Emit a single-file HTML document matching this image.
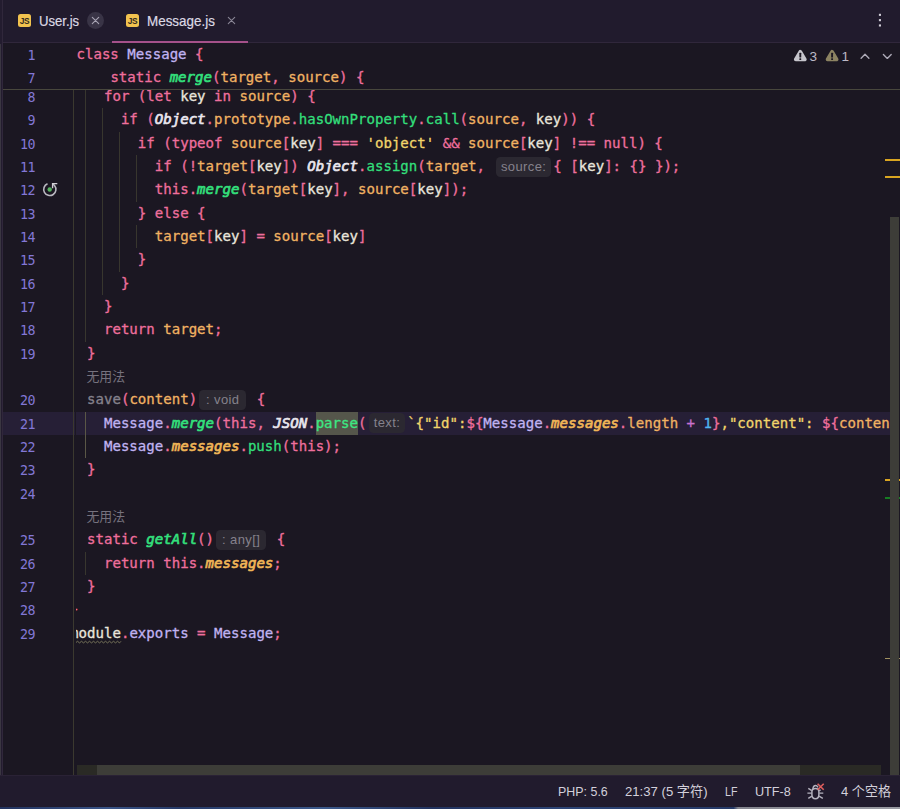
<!DOCTYPE html>
<html lang="zh-CN">
<head>
<meta charset="utf-8">
<title>Message.js</title>
<style>
*{box-sizing:border-box;margin:0;padding:0}
html,body{width:900px;height:809px;overflow:hidden;background:#1b1722}
body{position:relative;font-family:"Liberation Sans","Noto Sans CJK SC",sans-serif;color:#d6d3dd}
.abs{position:absolute}
/* tab bar */
#tabbar{position:absolute;left:0;top:0;width:900px;height:42px;background:#211b2d}
#tabline{position:absolute;left:0;top:41.5px;width:900px;height:1.5px;background:#30273b}
#leftstrip{position:absolute;left:0;top:0;width:2px;height:775px;background:#231c2f;z-index:12}
#leftstrip2{position:absolute;left:0;top:44px;width:1.3px;height:731px;background:#3a3641;z-index:13}
#leftline{position:absolute;left:2px;top:0;width:1px;height:775px;background:#30273b;z-index:12}
.jsicon{position:absolute;top:13.5px;width:13px;height:13px;border-radius:2.5px;background:#f2c34f;color:#3b3424;font:bold 8.4px/13px "Liberation Sans",sans-serif;text-align:center;letter-spacing:-0.4px;padding-top:1.7px;color:#322c1f}
.tabtxt{position:absolute;top:12px;font-size:14.5px;line-height:18px;color:#dcd9e4;white-space:nowrap;transform-origin:0 50%;transform:scaleX(0.905);-webkit-text-stroke:0.2px #dcd9e4}
#close1{position:absolute;left:87px;top:12px;width:17px;height:17px;border-radius:50%;background:#393446}
#underline{position:absolute;left:111.5px;top:40.5px;width:136.5px;height:2.2px;background:#a5518a;z-index:2}
/* editor */
#sticky{position:absolute;left:3px;top:43px;width:897px;height:46.5px;background:#1b1722;z-index:5}
#stickyline{position:absolute;left:3px;top:89px;width:897px;height:1px;background:#48473d;z-index:6}
#gutline{position:absolute;left:73.4px;top:90px;width:1px;height:685px;background:#3b392f;z-index:4}
#gutter{position:absolute;left:3px;top:43px;width:72.5px;height:732px;background:#1b1722;z-index:3}
#code{position:absolute;left:0;top:0;width:890px;height:775px;overflow:hidden;z-index:1}
.mono,.cl,.ln,.scl{font-family:"DejaVu Sans Mono","Liberation Mono",monospace}
.cl{-webkit-text-stroke:0.3px;position:absolute;left:70.1px;height:23.3px;line-height:23.3px;font-size:14.07px;white-space:pre}
.scl{-webkit-text-stroke:0.3px;position:absolute;left:76.5px;height:23.3px;line-height:23.3px;font-size:14.07px;white-space:pre;z-index:7}
.ln{position:absolute;left:3px;width:32px;text-align:right;height:23.3px;line-height:23.3px;padding-top:1.1px;font-size:13.3px;color:#8377d6;z-index:8;letter-spacing:-0.5px}
.curline{position:absolute;left:3px;width:887px;height:23.3px;background:#261f36}
.ig{position:absolute;width:1px;background:#38362e}
.ig2{background:#5a5746}
.uh{position:absolute;left:86.4px;height:23.3px;line-height:24px;font-size:12.9px;color:#76727e;white-space:nowrap}
.ih{-webkit-text-stroke:0;display:inline-block;vertical-align:top;margin-top:1.6px;height:20.3px;text-align:center;border-radius:4.5px;background:#2b2831;color:#85828c;font:13px/19.6px "Liberation Sans",sans-serif;letter-spacing:0.4px;text-indent:0.4px;overflow:hidden}
.k{color:#ef6f9d}.k2{color:#c972cf}
.v{color:#e9e5dc}.p{color:#f1b263}.b{color:#ef6f9d}
.f{color:#33df7b}.fi{color:#33df7b;font-style:italic;-webkit-text-stroke:0.7px}
.o{color:#e9e6ee;font-style:italic;-webkit-text-stroke:0.7px}
.m{color:#f0b557;font-style:italic;-webkit-text-stroke:0.7px}
.c{color:#c0b3f2}.s{color:#f2d56b}.n{color:#4fb4f1}.g{color:#85828d}
.selbg{position:absolute;height:23.3px;background:#55564b}.f2{color:#3ce883}
.wavy{text-decoration:underline wavy #77745c;text-decoration-thickness:1px;text-underline-offset:3px}
/* right */
.mk{position:absolute;left:885px;width:15px;height:2px;background:#d9a521;z-index:2}
#vthumb{position:absolute;left:890px;top:217px;width:9px;height:558px;background:#3d3d38;z-index:9}
#htrack{position:absolute;left:76.5px;top:765.2px;width:804.5px;height:9.8px;background:#2a2a25;z-index:9}
#hthumb{position:absolute;left:97px;top:765.2px;width:702.5px;height:9.8px;background:#3d3d38;z-index:10}
/* status */
#status{position:absolute;left:0;top:775px;width:900px;height:32px;background:#211b2d;z-index:11;border-top:1px solid #2a2235}
.cj{position:relative;top:0.9px}
.st{position:absolute;top:7.6px;font-size:13.3px;line-height:16px;color:#d3d0db;white-space:nowrap;transform-origin:0 50%}
#bottom{position:absolute;left:0;top:807.3px;width:900px;height:1.7px;z-index:12;background:linear-gradient(90deg,#22335f 0%,#3a5588 12%,#263a68 20%,#3c5a8c 36%,#22335f 48%,#2d4576 62%,#263a68 81.5%,#85868f 82%,#9a9ba3 100%)}
</style>
</head>
<body>
<div id="tabbar">
  <div class="jsicon" style="left:18px">JS</div>
  <div class="tabtxt" style="left:38.5px">User.js</div>
  <div id="close1"></div>
  <svg class="abs" style="left:91px;top:16px" width="9" height="9" viewBox="0 0 9 9"><path d="M1.3 1.3 L7.7 7.7 M7.7 1.3 L1.3 7.7" stroke="#a9a5b5" stroke-width="1.1" fill="none" stroke-linecap="round"/></svg>
  <div class="jsicon" style="left:126px">JS</div>
  <div class="tabtxt" style="left:146.5px;transform:scaleX(0.925)">Message.js</div>
  <svg class="abs" style="left:227px;top:16px" width="9" height="9" viewBox="0 0 9 9"><path d="M1.3 1.3 L7.7 7.7 M7.7 1.3 L1.3 7.7" stroke="#8a8696" stroke-width="1.1" fill="none" stroke-linecap="round"/></svg>
  <svg class="abs" style="left:875px;top:10px" width="10" height="20" viewBox="0 0 10 20"><rect x="3.9" y="3.8" width="2.1" height="2.1" fill="#cfccd6"/><rect x="3.9" y="9.1" width="2.1" height="2.1" fill="#cfccd6"/><rect x="3.9" y="14.4" width="2.1" height="2.1" fill="#cfccd6"/></svg>
</div>
<div id="tabline"></div>
<div id="leftstrip"></div><div id="leftstrip2"></div><div id="leftline"></div>
<div id="underline"></div>

<div id="code">
<div class="curline" style="top:411.6px"></div>
<div class="selbg" style="top:411.6px;left:315.9px;width:42.4px"></div>
<div class="ig" style="left:85.3px;top:85.0px;height:256.6px"></div>
<div class="ig" style="left:102.3px;top:108.3px;height:186.6px"></div>
<div class="ig" style="left:119.2px;top:131.7px;height:140.0px"></div>
<div class="ig" style="left:136.2px;top:155.0px;height:46.7px"></div>
<div class="ig" style="left:136.2px;top:225.0px;height:23.3px"></div>
<div class="ig ig2" style="left:85.3px;top:411.6px;height:46.7px"></div>
<div class="ig" style="left:85.3px;top:551.6px;height:23.3px"></div>
<div class="cl" style="top:85.0px"><span class="w">    </span><span class="k">for (</span><span class="k">let </span><span class="v">key </span><span class="k">in </span><span class="p">source</span><span class="k">) {</span></div>
<div class="cl" style="top:108.3px"><span class="w">      </span><span class="k">if (</span><span class="o">Object</span><span class="k">.</span><span class="p">prototype</span><span class="k">.</span><span class="f">hasOwnProperty</span><span class="k">.</span><span class="f">call</span><span class="k">(</span><span class="p">source</span><span class="k">, </span><span class="v">key</span><span class="k">)) {</span></div>
<div class="cl" style="top:131.7px"><span class="w">        </span><span class="k">if (typeof </span><span class="p">source</span><span class="b">[</span><span class="v">key</span><span class="b">] </span><span class="k">=== </span><span class="s">'object' </span><span class="k">&amp;&amp; </span><span class="p">source</span><span class="b">[</span><span class="v">key</span><span class="b">] </span><span class="k">!== null) {</span></div>
<div class="cl" style="top:155.0px"><span class="w">          </span><span class="k">if (!</span><span class="p">target</span><span class="b">[</span><span class="v">key</span><span class="b">]</span><span class="k">) </span><span class="o">Object</span><span class="k">.</span><span class="f">assign</span><span class="k">(</span><span class="p">target</span><span class="k">, </span><span class="ih" style="width:54.8px;margin-left:2.5px;margin-right:2.5px">source:</span><span class="k">{ </span><span class="b">[</span><span class="v">key</span><span class="b">]</span><span class="k">: {} });</span></div>
<div class="cl" style="top:178.3px"><span class="w">          </span><span class="k">this.</span><span class="fi">merge</span><span class="k">(</span><span class="p">target</span><span class="b">[</span><span class="v">key</span><span class="b">]</span><span class="k">, </span><span class="p">source</span><span class="b">[</span><span class="v">key</span><span class="b">]</span><span class="k">);</span></div>
<div class="cl" style="top:201.6px"><span class="w">        </span><span class="k">} else {</span></div>
<div class="cl" style="top:225.0px"><span class="w">          </span><span class="p">target</span><span class="b">[</span><span class="v">key</span><span class="b">] </span><span class="k">= </span><span class="p">source</span><span class="b">[</span><span class="v">key</span><span class="b">]</span></div>
<div class="cl" style="top:248.3px"><span class="w">        </span><span class="k">}</span></div>
<div class="cl" style="top:271.6px"><span class="w">      </span><span class="k">}</span></div>
<div class="cl" style="top:295.0px"><span class="w">    </span><span class="k">}</span></div>
<div class="cl" style="top:318.3px"><span class="w">    </span><span class="k">return </span><span class="p">target</span><span class="k">;</span></div>
<div class="cl" style="top:341.6px"><span class="w">  </span><span class="k">}</span></div>
<div class="uh" style="top:365.0px">无用法</div>
<div class="cl" style="top:388.3px"><span class="w">  </span><span class="g">save</span><span class="k">(</span><span class="p">content</span><span class="k">)</span><span class="ih" style="width:47.0px;margin-left:1.9px;margin-right:2.3px">: void</span><span class="k"> {</span></div>
<div class="cl" style="top:411.6px"><span class="w">    </span><span class="c">Message</span><span class="k">.</span><span class="fi">merge</span><span class="k">(this, </span><span class="o">JSON</span><span class="k">.</span><span class="f2">parse</span><span class="k">(</span><span class="ih" style="width:35.7px;margin-left:2.5px;margin-right:2.5px">text:</span><span class="s">`{"id":</span><span class="k">${</span><span class="c">Message</span><span class="k">.</span><span class="m">messages</span><span class="k">.</span><span class="p">length </span><span class="k2">+ </span><span class="n">1</span><span class="k">}</span><span class="s">,"content": </span><span class="k">${</span><span class="p">content</span></div>
<div class="cl" style="top:434.9px"><span class="w">    </span><span class="c">Message</span><span class="k">.</span><span class="m">messages</span><span class="k">.</span><span class="f">push</span><span class="k">(this);</span></div>
<div class="cl" style="top:458.3px"><span class="w">  </span><span class="k">}</span></div>
<div class="cl" style="top:481.6px"></div>
<div class="uh" style="top:504.9px">无用法</div>
<div class="cl" style="top:528.3px"><span class="w">  </span><span class="k">static </span><span class="fi">getAll</span><span class="k">()</span><span class="ih" style="width:49.8px;margin-left:2.0px;margin-right:2.5px">: any[]</span><span class="k"> {</span></div>
<div class="cl" style="top:551.6px"><span class="w">    </span><span class="k">return this.</span><span class="m">messages</span><span class="k">;</span></div>
<div class="cl" style="top:574.9px"><span class="w">  </span><span class="k">}</span></div>
<div class="cl" style="top:598.3px"><span class="k">}</span></div>
<div class="cl" style="top:621.6px"><span class="v">module</span><span class="k">.</span><span class="c">exports </span><span class="k">= </span><span class="c">Message</span><span class="k">;</span></div>
<svg class="abs" style="left:0;top:0" width="200" height="775" viewBox="0 0 200 775"><path d="M75.50 642.89 L77.50 641.29 L79.50 642.89 L81.50 641.29 L83.50 642.89 L85.50 641.29 L87.50 642.89 L89.50 641.29 L91.50 642.89 L93.50 641.29 L95.50 642.89 L97.50 641.29 L99.50 642.89 L101.50 641.29 L103.50 642.89 L105.50 641.29 L107.50 642.89 L109.50 641.29 L111.50 642.89 L113.50 641.29 L115.50 642.89 L117.50 641.29 L119.50 642.89 L121.00 641.29" fill="none" stroke="#807d60" stroke-width="0.9"/></svg>
</div>

<div id="gutter"></div>
<div class="ln" style="top:85.0px">8</div>
<div class="ln" style="top:108.3px">9</div>
<div class="ln" style="top:131.7px">10</div>
<div class="ln" style="top:155.0px">11</div>
<div class="ln" style="top:178.3px">12</div>
<div class="ln" style="top:201.6px">13</div>
<div class="ln" style="top:225.0px">14</div>
<div class="ln" style="top:248.3px">15</div>
<div class="ln" style="top:271.6px">16</div>
<div class="ln" style="top:295.0px">17</div>
<div class="ln" style="top:318.3px">18</div>
<div class="ln" style="top:341.6px">19</div>
<div class="ln" style="top:388.3px">20</div>
<div class="ln" style="top:411.6px">21</div>
<div class="ln" style="top:434.9px">22</div>
<div class="ln" style="top:458.3px">23</div>
<div class="ln" style="top:481.6px">24</div>
<div class="ln" style="top:528.3px">25</div>
<div class="ln" style="top:551.6px">26</div>
<div class="ln" style="top:574.9px">27</div>
<div class="ln" style="top:598.3px">28</div>
<div class="ln" style="top:621.6px">29</div>
<div class="curline" style="top:411.6px;z-index:4;width:72px"></div>
<div id="gutline"></div>

<!-- recursive call icon on line 12 -->
<svg class="abs" style="left:41px;top:178.3px;z-index:8" width="20" height="23.3" viewBox="0 0 20 23.3">
  <path d="M6.50 5.80 A6.10 6.10 0 1 0 13.50 7.55 L11.80 5.85" fill="none" stroke="#bab9c1" stroke-width="1.55" stroke-linecap="butt"/>
  <path d="M16.30 5.65 L11.60 5.65 L11.60 10.25" fill="none" stroke="#d0cfd5" stroke-width="1.4" stroke-linecap="butt" stroke-linejoin="miter"/>
  <circle cx="8.70" cy="11.50" r="2.2" fill="#55b25f"/>
</svg>

<!-- sticky lines -->
<div id="sticky"></div>
<div class="scl" style="top:43px"><span class="k">class </span><span class="c">Message </span><span class="k">{</span></div>
<div class="scl" style="top:66.1px"><span class="w">    </span><span class="k">static </span><span class="fi">merge</span><span class="k">(</span><span class="p">target</span><span class="k">, </span><span class="p">source</span><span class="k">) {</span></div>
<div class="ln" style="top:42.9px;z-index:8">1</div>
<div class="ln" style="top:66.2px;z-index:8">7</div>
<div id="stickyline"></div>

<!-- inspections widget -->
<svg class="abs" style="left:793px;top:48px;z-index:8" width="104" height="16" viewBox="0 0 104 16">
  <path d="M7.3 3.75 L11.9 11.4 L2.7 11.4 Z" fill="#c6c5cc" stroke="#c6c5cc" stroke-width="3.6" stroke-linejoin="round"/>
  <rect x="6.35" y="4.8" width="1.9" height="4.7" rx="0.5" fill="#1b1722"/>
  <rect x="6.35" y="10.3" width="1.9" height="1.7" rx="0.5" fill="#1b1722"/>
  <path d="M39.1 3.75 L43.7 11.4 L34.5 11.4 Z" fill="#8c8362" stroke="#8c8362" stroke-width="3.6" stroke-linejoin="round"/>
  <rect x="38.15" y="4.8" width="1.9" height="4.7" rx="0.5" fill="#1b1722"/>
  <rect x="38.15" y="10.3" width="1.9" height="1.7" rx="0.5" fill="#1b1722"/>
  <path d="M68.1 10.2 L72 6.3 L75.9 10.2" fill="none" stroke="#aeabb8" stroke-width="1.35" stroke-linecap="round" stroke-linejoin="round"/>
  <path d="M90.4 6.5 L94.3 10.4 L98.2 6.5" fill="none" stroke="#aeabb8" stroke-width="1.35" stroke-linecap="round" stroke-linejoin="round"/>
</svg>
<div class="abs" style="left:809.6px;top:49.2px;font-size:13.6px;line-height:16px;color:#bcb9c6;z-index:8">3</div>
<div class="abs" style="left:841.6px;top:49.2px;font-size:13.6px;line-height:16px;color:#bcb9c6;z-index:8">1</div>

<!-- error stripe marks -->
<div class="mk" style="top:159.2px"></div>
<div class="mk" style="top:176.2px"></div>
<div class="mk" style="top:479px"></div>
<div class="mk" style="top:497.3px;background:#177c23"></div>
<div class="mk" style="top:657.5px;background:#a09060;height:1.6px"></div>
<div id="vthumb"></div>
<div id="htrack"></div>
<div id="hthumb"></div>

<div id="status">
  <div class="st" style="left:558px;transform:scaleX(0.935)">PHP: 5.6</div>
  <div class="st" style="left:624.8px;transform:scaleX(0.988)">21:37 (5 <span class="cj">字符</span>)</div>
  <div class="st" style="left:724.6px;transform:scaleX(0.8)">LF</div>
  <div class="st" style="left:754.5px;transform:scaleX(0.95)">UTF-8</div>
  <svg class="abs" style="left:806px;top:5px" width="20" height="20" viewBox="0 0 20 20">
    <path d="M5.9 10.8 Q5.9 7.4 9.4 7.4 Q12.9 7.4 12.9 10.8 L12.9 13.6 Q12.9 17.8 9.4 17.8 Q5.9 17.8 5.9 13.6 Z" fill="none" stroke="#b4b2be" stroke-width="1.5"/>
    <path d="M6.9 7.7 Q7.2 4.5 9.6 4.5 Q11.1 4.5 11.7 5.9" fill="none" stroke="#b4b2be" stroke-width="1.4" stroke-linecap="round"/>
    <path d="M2.3 7.4 L5.8 9.7 M1.4 12.1 L5.6 12.1 M2.3 17.3 L5.9 15.2 M13.2 9.7 L14.6 8.8 M13.4 12.1 L17.3 12.1 M13.1 15.2 L16.8 17.3" fill="none" stroke="#b4b2be" stroke-width="1.4" stroke-linecap="butt"/>
    <path d="M11.6 2.7 L17.7 8.8 M17.7 2.7 L11.6 8.8" stroke="#df5f5e" stroke-width="1.6" stroke-linecap="butt"/>
  </svg>
  <div class="st" style="left:840.8px;transform:scaleX(0.98)">4 <span class="cj">个空格</span></div>
</div>
<div id="bottom"></div>
</body>
</html>
